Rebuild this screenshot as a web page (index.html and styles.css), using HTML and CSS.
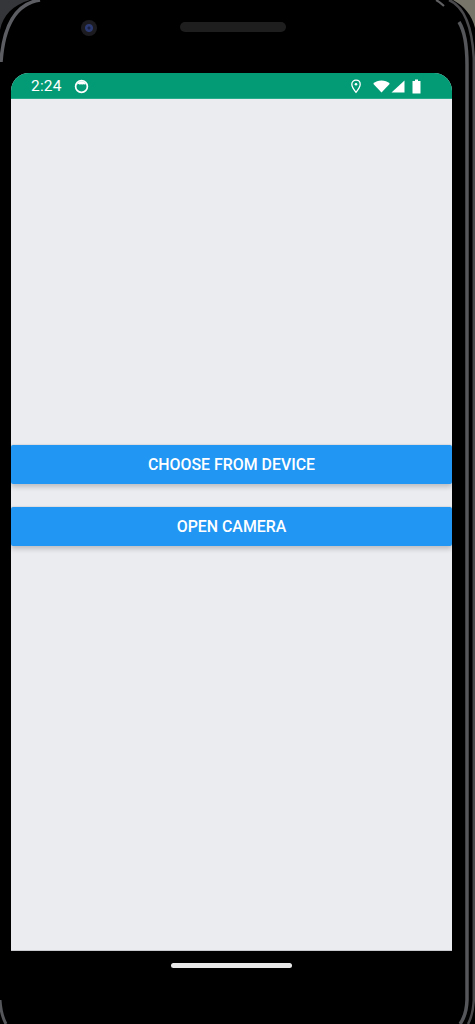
FILE: index.html
```html
<!DOCTYPE html>
<html lang="en">
<head>
<meta charset="utf-8">
<title>Image picker</title>
<link rel="stylesheet" href="styles.css">
</head>
<body>
<div class="device">
  <svg class="bezel" viewBox="0 0 475 1024" width="475" height="1024" aria-hidden="true">
    <path d="M0 0H30C13 5 3 15 0 30Z" fill="#35363a"/>
    <path d="M40 0C20 3 4 19 1 62" fill="none" stroke="#5b5d62" stroke-width="3.500"/>
    <path d="M453 0C464 6 472 15 475 28V0Z" fill="#77756a"/>
    <path d="M436 0Q440 2 444 6" fill="none" stroke="#5f5f62" stroke-width="2"/>
    <path d="M449 0C463 6 472 25 473.800 58V1000Q473 1015 468 1024" fill="none" stroke="#4a4a4d" stroke-width="2.500"/>
    <path d="M459 22C464 30 467 45 467 65V1000Q466.500 1015 460 1024" fill="none" stroke="#55565a" stroke-width="3.500"/>
    <path d="M0 1000Q1 1015 6 1024" fill="none" stroke="#55565a" stroke-width="3"/>
  </svg>
  <div class="hardware">
    <span class="camera"></span>
    <span class="speaker"></span>
  </div>
  <main class="screen">
    <header class="status-bar">
      <div class="status-left">
        <span class="clock">2:24</span>
        <svg class="icon-app" viewBox="0 0 15 15" width="15" height="15"><circle cx="7.500" cy="7.500" r="5.900" fill="none" stroke="#fff" stroke-width="1.700"/><path d="M3 5.500C3.800 3.200 5.500 2.200 7.500 2.200s3.700 1 4.500 3.300C11.200 5 10.600 5.900 9.800 5.300 8.900 4.700 8.300 5.900 7.400 5.300 6.500 4.700 5.900 5.900 5.100 5.300 4.300 4.800 3.700 5.300 3 5.500Z" fill="#fff"/></svg>
      </div>
      <div class="status-right">
        <svg class="icon-pin" viewBox="0 0 12 15" width="12" height="15"><path d="M6 1.200C3.500 1.200 1.800 3 1.800 5.300 1.800 8.200 6 13.300 6 13.300S10.200 8.200 10.200 5.300C10.200 3 8.500 1.200 6 1.200Z" fill="none" stroke="#fff" stroke-width="1.300"/><circle cx="6" cy="5.300" r="1.300" fill="#fff"/></svg>
        <svg class="icon-wifi" viewBox="0 0 17 13" width="17" height="13"><path d="M0.200 3.800C2.500 1.700 5.300 0.600 8.500 0.600s6 1.100 8.300 3.200L8.500 12.600Z" fill="#fff"/></svg>
        <svg class="icon-signal" viewBox="0 0 14 13" width="14" height="13"><path d="M13.500 0.500V12.500H0.500Z" fill="#fff"/></svg>
        <svg class="icon-battery" viewBox="0 0 9 15" width="9" height="15"><path d="M3 0.500H6V2H8.500V14.500H0.500V2H3Z" fill="#fff"/></svg>
      </div>
    </header>
    <div class="content">
      <button class="action" type="button">CHOOSE FROM DEVICE</button>
      <button class="action" type="button">OPEN CAMERA</button>
    </div>
  </main>
  <footer class="nav-area">
    <span class="home-pill"></span>
  </footer>
</div>
</body>
</html>
```
FILE: styles.css
```css
* { box-sizing: border-box; }
html, body { margin: 0; padding: 0; background: #000; }
body { width: 475px; height: 1024px; overflow: hidden; font-family: Roboto, "Liberation Sans", sans-serif; }
.device { position: relative; width: 475px; height: 1024px; background: #000; padding-left: 11px; display: flex; flex-direction: column; }
.bezel { position: absolute; left: 0; top: 0; pointer-events: none; }
.hardware { height: 73px; position: relative; flex: none; }
.camera { position: absolute; left: 70px; top: 20px; width: 16px; height: 16px; border-radius: 50%; background: radial-gradient(circle, #1a2140 0 1px, #2b3a72 2px 3.500px, #1c1c20 4.500px 8px); }
.speaker { position: absolute; left: 169px; top: 22px; width: 106px; height: 10px; border-radius: 5px; background: #1e1e1e; }
.screen { width: 441px; height: 878px; flex: none; display: flex; flex-direction: column; background: #ebecf0; border-bottom: 1px solid #c8c9cc; border-radius: 18px 18px 0 0; overflow: hidden; }
.status-bar { height: 26px; flex: none; background: #029b76; border-bottom: 1px solid #27ab8b; color: #fff; display: flex; justify-content: space-between; align-items: center; padding: 1px 0 0 20px; }
.status-left { display: flex; align-items: center; gap: 12px; }
.clock { font-size: 15.500px; letter-spacing: 0.2px; }
.status-right { display: flex; align-items: center; padding-right: 31px; }
.icon-pin { margin-right: 11px; }
.icon-signal { margin-right: 7px; }
.icon-wifi { margin-right: 1px; }
.icon-app, .icon-pin, .icon-wifi, .icon-signal, .icon-battery { display: block; }
.content { flex: 1; display: flex; flex-direction: column; justify-content: center; gap: 23px; padding-bottom: 59px; }
.action { display: block; flex: none; width: 100%; height: 39px; border: 0; border-radius: 2px; background: #2196f3; color: #fff; font-family: Roboto, sans-serif; font-size: 15.900px; font-weight: 500; box-shadow: 0 3px 5px rgba(0,0,0,.2), 0 -1px 1px rgba(0,0,0,.06); padding: 1px 0 0; }
.nav-area { flex: 1; display: flex; justify-content: center; align-items: flex-start; padding: 12px 23px 0 0; }
.home-pill { width: 121px; height: 5px; border-radius: 2.500px; background: #e8e8e8; }
```
